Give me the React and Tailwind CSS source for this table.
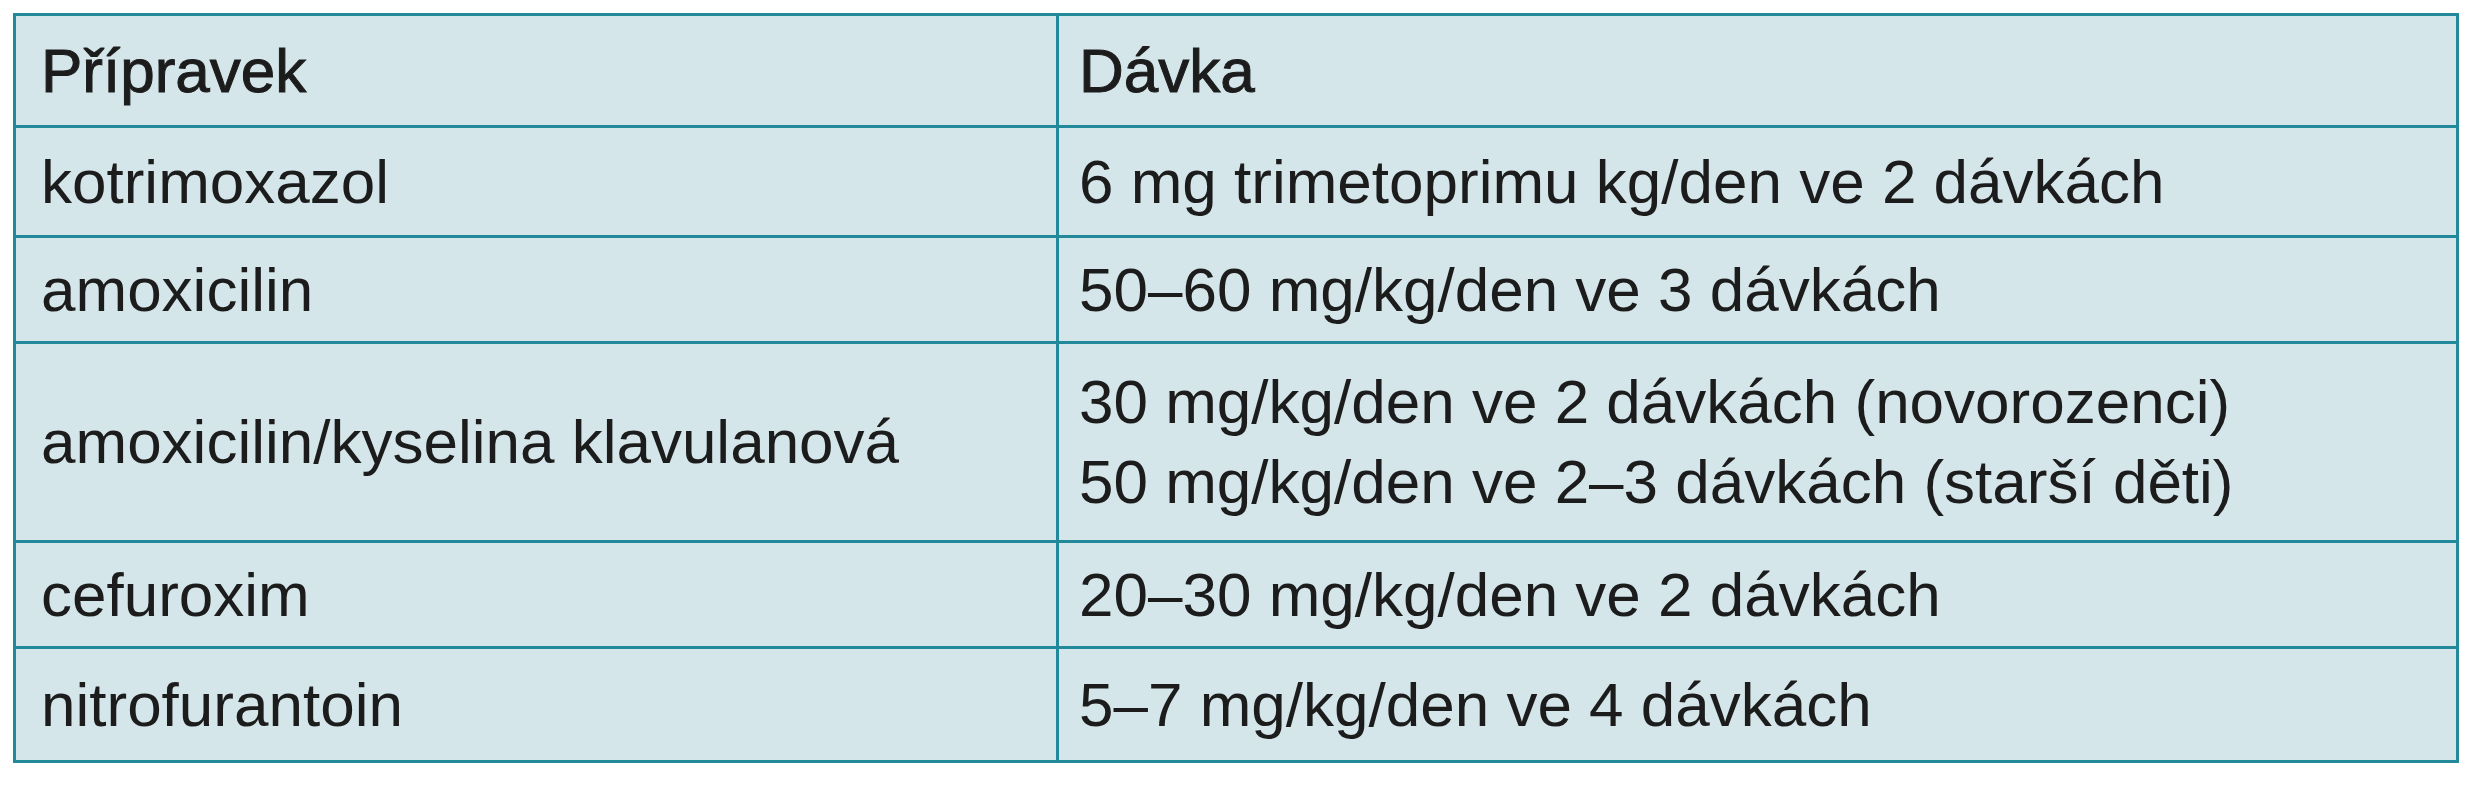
import React from 'react';

const rows = [
  { name: 'kotrimoxazol', dose: ['6 mg trimetoprimu kg/den ve 2 dávkách'], h: 'h-[110px]' },
  { name: 'amoxicilin', dose: ['50–60 mg/kg/den ve 3 dávkách'], h: 'h-[106px]' },
  {
    name: 'amoxicilin/kyselina klavulanová',
    dose: ['30 mg/kg/den ve 2 dávkách (novorozenci)', '50 mg/kg/den ve 2–3 dávkách (starší děti)'],
    h: 'h-[199px]',
  },
  { name: 'cefuroxim', dose: ['20–30 mg/kg/den ve 2 dávkách'], h: 'h-[106px]' },
  { name: 'nitrofurantoin', dose: ['5–7 mg/kg/den ve 4 dávkách'], h: 'h-[114px]' },
];

const App = () => {
  return (
    <div
      className="w-[2471px] h-[800px] bg-white pt-[13px] pl-[13px] text-[#1c1c1c] text-[62px]"
      style={{ fontFamily: '"Liberation Sans", Arial, sans-serif' }}
    >
      <div className="w-[2446px] border-[3px] border-[#21899a] bg-[#d4e6ea]">
        {/* header */}
        <div className="flex h-[109px]">
          <div className="w-[1043px] border-r-[3px] border-[#21899a] flex items-center pl-[25px] leading-none [-webkit-text-stroke:1px_#1c1c1c]">
            Přípravek
          </div>
          <div className="flex-1 flex items-center pl-[20px] leading-none [-webkit-text-stroke:1px_#1c1c1c]">
            Dávka
          </div>
        </div>

        {rows.map((row, index) => (
          <div key={index} className={`flex border-t-[3px] border-[#21899a] ${row.h}`}>
            <div className="w-[1043px] border-r-[3px] border-[#21899a] flex items-center pl-[25px] leading-none">
              {row.name}
            </div>
            <div className="flex-1 flex flex-col justify-center pl-[20px] leading-[80px]">
              {row.dose.map((line, i) => (
                <div key={i} className="whitespace-nowrap">{line}</div>
              ))}
            </div>
          </div>
        ))}
      </div>
    </div>
  );
};

export default App;
